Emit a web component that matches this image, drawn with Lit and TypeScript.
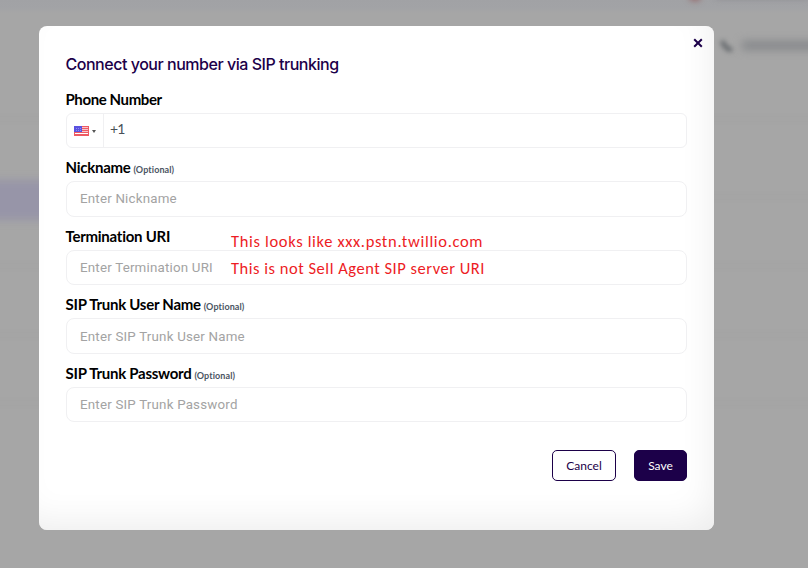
import { LitElement, html, css, svg, nothing } from "lit";
import { customElement, property } from "lit/decorators.js";

@customElement("form-field")
class FormField extends LitElement {
  @property() label = "";
  @property() placeholder = "";
  @property({ type: Boolean }) optional = false;

  static styles = css`
    :host { display: block; height: 68.6px; }
    .label {
      height: 20px;
      margin-left: -0.5px;
      font: 700 15px/20px Lato, sans-serif;
      letter-spacing: -0.26px;
      color: #000;
      white-space: nowrap;
    }
    .optional { font-size: 9px; letter-spacing: 0.1px; color: #4b5563; margin-left: -0.5px; }
    .input {
      display: block;
      box-sizing: border-box;
      width: 100%;
      height: 35.7px;
      margin-top: 4px;
      padding: 0 13px;
      border: 1px solid #f0f0f2;
      border-radius: 8px;
      background: #fff;
      outline: none;
      color: #333;
      font: 400 13.33px Roboto, sans-serif;
      letter-spacing: 0.2px;
    }
    :host(.first) .input { padding-bottom: 1px; }
    .input::placeholder { color: #a3a3a3; opacity: 1; }
  `;

  render() {
    return html`
      <div class="label">${this.label}${this.optional ? html` <span class="optional">(Optional)</span>` : nothing}</div>
      <input class="input" placeholder=${this.placeholder} aria-label=${this.label} />
    `;
  }
}

@customElement("phone-field")
class PhoneField extends LitElement {
  static styles = css`
    :host { display: block; height: 68px; }
    .label { margin-left: -0.5px; font: 700 15px/20px Lato, sans-serif; letter-spacing: -0.4px; color: #000; }
    .box {
      display: flex;
      box-sizing: border-box;
      height: 35px;
      margin-top: 4px;
      border: 1px solid #f0f0f2;
      border-radius: 6px;
      background: #fff;
    }
    .country {
      display: flex;
      align-items: center;
      box-sizing: border-box;
      width: 37px;
      padding: 1px 0 0 7px;
      border-right: 1px solid #f0f0f2;
    }
    .flag { display: block; width: 15px; height: 10px; }
    .caret {
      margin-left: 3px;
      border: 2px solid transparent;
      border-top: 3px solid #555;
      border-bottom: 0;
    }
    .code { padding-left: 6px; font: 400 14px/30px Lato, sans-serif; letter-spacing: -0.8px; color: #495057; }
  `;

  render() {
    const stripes = [1, 3, 5, 7].map((y) => svg`<rect x="1" y=${y} width="13" height="1" fill="#f8c4ca" />`);
    const stars = [2, 4, 6].map((x) => svg`<path d="M${x} 1.5v1M${x} 3.5v1" stroke="#9c9cf5" stroke-width=".8" />`);
    return html`
      <div class="label">Phone Number</div>
      <div class="box">
        <div class="country">
          <svg class="flag" viewBox="0 0 15 10" shape-rendering="crispEdges">
            <rect width="15" height="10" fill="#ee5a63" />
            ${stripes}
            <rect width="8" height="6" fill="#5a52e0" />
            ${stars}
            <rect x="1" y="7" width="13" height="1" fill="#fff" />
          </svg>
          <span class="caret"></span>
        </div>
        <span class="code">+1</span>
      </div>
    `;
  }
}

@customElement("app-root")
class AppRoot extends LitElement {
  static styles = css`
    :host {
      display: block;
      position: relative;
      box-sizing: border-box;
      width: 808px;
      height: 568px;
      padding: 26px 0 0 39px;
      overflow: hidden;
      background: linear-gradient(#a1a2a5 0, #a2a3a6 8px, #a6a6a6 13px);
      font-family: Lato, sans-serif;
    }
    .dim { position: absolute; filter: blur(4px); }
    .nav { left: -10px; top: 180px; width: 70px; height: 40px; background: #9795a8; }
    .dot { left: 689px; top: -10px; width: 12px; height: 11px; border-radius: 6px; background: #95686b; filter: blur(3px); }
    .top-text { left: 716px; top: -7px; width: 92px; height: 5px; background: #858388; filter: blur(3px); }
    .phone { left: 718px; top: 38px; width: 16px; height: 16px; filter: blur(2.6px); }
    .help { left: 742px; top: 41px; width: 80px; height: 9px; background: #86888b; filter: blur(4px); }
    .rule { left: -10px; width: 828px; height: 2px; background: #a3a3a3; filter: blur(3px); }
    .rule.a { top: 118px; }
    .rule.b { top: 196px; }
    .rule.c { top: 265px; }
    .rule.d { top: 334px; }
    .rule.e { top: 402px; }
    .modal {
      position: relative;
      box-sizing: border-box;
      width: 675px;
      height: 504px;
      padding: 28px 27px 0;
      border-radius: 8px;
      background: #fff;
      box-shadow: inset -12px -18px 36px -12px #ececec;
    }
    .close { position: absolute; right: 11px; top: 11.5px; width: 10px; height: 10px; }
    .title {
      margin: 0 0 15px -0.5px;
      font: 500 16px/20px Inter, sans-serif;
      letter-spacing: -0.47px;
      color: #1c0049;
      white-space: nowrap;
    }
    .actions { display: flex; justify-content: flex-end; gap: 18px; margin-top: 18.6px; }
    .button {
      box-sizing: border-box;
      height: 31px;
      padding: 0;
      border: 1px solid #1c0049;
      border-radius: 5px;
      font: 400 12px Lato, sans-serif;
    }
    .cancel { width: 64px; background: #fff; color: #1c0049; }
    .save { width: 53px; background: #1c0049; color: #fff; }
    .notes {
      position: absolute;
      left: 192px;
      top: 202px;
      font: 400 16.5px/27px Carlito, Lato, sans-serif;
      color: #ed1c24;
      white-space: nowrap;
    }
    .note-a { letter-spacing: 0.66px; }
    .note-b { letter-spacing: 0.52px; }
  `;

  render() {
    return html`
      ${["a", "b", "c", "d", "e"].map((n) => html`<div class="dim rule ${n}"></div>`)}
      <div class="dim nav"></div>
      <div class="dim dot"></div>
      <div class="dim top-text"></div>
      <svg class="dim phone" viewBox="0 0 16 16"><path d="M4 3l2 4 4 4 4 1" fill="none" stroke="#62666a" stroke-width="4.5" /></svg>
      <div class="dim help"></div>
      <section class="modal" role="dialog">
        <svg class="close" viewBox="0 0 10 10"><path d="M1.2 1.2L8.8 8.8M8.8 1.2L1.2 8.8" stroke="#1c0049" stroke-width="2" /></svg>
        <h1 class="title">Connect your number via SIP trunking</h1>
        <phone-field></phone-field>
        <form-field class="first" label="Nickname" placeholder="Enter Nickname" optional></form-field>
        <form-field label="Termination URI" placeholder="Enter Termination URI"></form-field>
        <form-field label="SIP Trunk User Name" placeholder="Enter SIP Trunk User Name" optional></form-field>
        <form-field label="SIP Trunk Password" placeholder="Enter SIP Trunk Password" optional></form-field>
        <div class="actions">
          <button class="button cancel">Cancel</button>
          <button class="button save">Save</button>
        </div>
        <div class="notes">
          <div class="note-a">This looks like xxx.pstn.twillio.com</div>
          <div class="note-b">This is not Sell Agent SIP server URI</div>
        </div>
      </section>
    `;
  }
}
